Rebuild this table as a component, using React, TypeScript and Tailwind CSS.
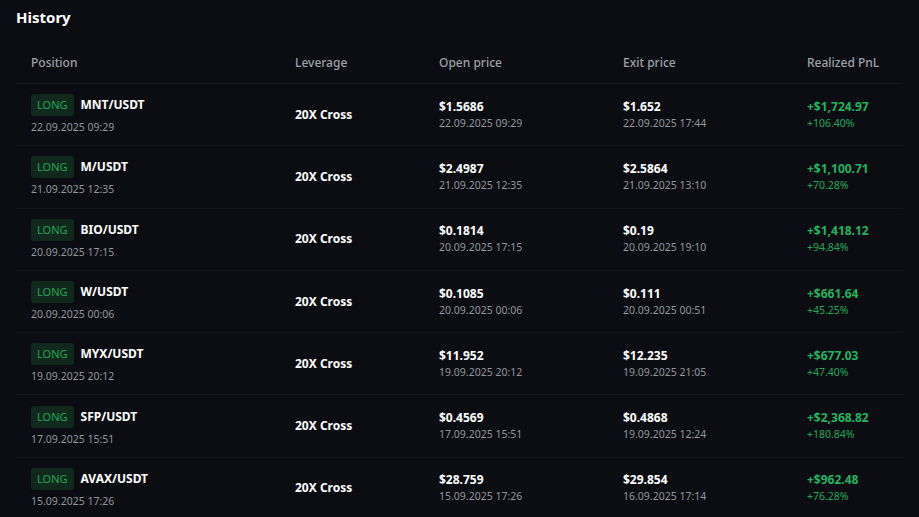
import React from 'react';

type Trade = {
  pair: string;
  opened: string;
  openPrice: string;
  openTime: string;
  exitPrice: string;
  exitTime: string;
  pnl: string;
  pnlPct: string;
};

const trades: Trade[] = [
  { pair: 'MNT/USDT', opened: '22.09.2025 09:29', openPrice: '$1.5686', openTime: '22.09.2025 09:29', exitPrice: '$1.652', exitTime: '22.09.2025 17:44', pnl: '+$1,724.97', pnlPct: '+106.40%' },
  { pair: 'M/USDT', opened: '21.09.2025 12:35', openPrice: '$2.4987', openTime: '21.09.2025 12:35', exitPrice: '$2.5864', exitTime: '21.09.2025 13:10', pnl: '+$1,100.71', pnlPct: '+70.28%' },
  { pair: 'BIO/USDT', opened: '20.09.2025 17:15', openPrice: '$0.1814', openTime: '20.09.2025 17:15', exitPrice: '$0.19', exitTime: '20.09.2025 19:10', pnl: '+$1,418.12', pnlPct: '+94.84%' },
  { pair: 'W/USDT', opened: '20.09.2025 00:06', openPrice: '$0.1085', openTime: '20.09.2025 00:06', exitPrice: '$0.111', exitTime: '20.09.2025 00:51', pnl: '+$661.64', pnlPct: '+45.25%' },
  { pair: 'MYX/USDT', opened: '19.09.2025 20:12', openPrice: '$11.952', openTime: '19.09.2025 20:12', exitPrice: '$12.235', exitTime: '19.09.2025 21:05', pnl: '+$677.03', pnlPct: '+47.40%' },
  { pair: 'SFP/USDT', opened: '17.09.2025 15:51', openPrice: '$0.4569', openTime: '17.09.2025 15:51', exitPrice: '$0.4868', exitTime: '19.09.2025 12:24', pnl: '+$2,368.82', pnlPct: '+180.84%' },
  { pair: 'AVAX/USDT', opened: '15.09.2025 17:26', openPrice: '$28.759', openTime: '15.09.2025 17:26', exitPrice: '$29.854', exitTime: '16.09.2025 17:14', pnl: '+$962.48', pnlPct: '+76.28%' },
];

const cols = 'grid grid-cols-[264px_144px_184px_184px_1fr]';

function PriceCell({ price, time }: { price: string; time: string }) {
  return (
    <div className="flex flex-col px-[15px]">
      <span className="text-[12px] font-bold leading-[16px] text-white">{price}</span>
      <span className="text-[10.5px] leading-[16px] text-[#93969e]">{time}</span>
    </div>
  );
}

export default function App() {
  return (
    <div
      className="h-[517px] w-[919px] overflow-hidden bg-[#0c0d12] px-4"
      style={{ fontFamily: '"Noto Sans", "Open Sans", sans-serif' }}
    >
      {/* Title */}
      <h2 className="pt-[5px] text-[15px] font-bold leading-[24px] text-white">History</h2>

      {/* Header */}
      <div className={`${cols} mt-[14px] h-[41px] items-center border-b border-[#17191f] text-[12px] font-medium text-[#9ea1a9]`}>
        <span className="px-[15px]">Position</span>
        <span className="px-[15px]">Leverage</span>
        <span className="px-[15px]">Open price</span>
        <span className="px-[15px]">Exit price</span>
        <span className="px-[15px]">Realized PnL</span>
      </div>

      {/* Rows */}
      {trades.map((t) => (
        <div key={t.pair} className={`${cols} h-[62.3px] items-center border-b border-[#15171d]`}>
          <div className="flex flex-col gap-[3px] px-[15px]">
            <div className="flex items-center gap-[7px]">
              <span className="rounded-[3px] bg-[#0f2a1c] px-[6px] text-[11px] leading-[22px] text-[#24a65a]">LONG</span>
              <span className="text-[12px] font-bold text-white">{t.pair}</span>
            </div>
            <span className="text-[10.5px] leading-[16px] text-[#93969e]">{t.opened}</span>
          </div>
          <div className="px-[15px] text-[12px] font-bold text-white">20X Cross</div>
          <PriceCell price={t.openPrice} time={t.openTime} />
          <PriceCell price={t.exitPrice} time={t.exitTime} />
          <div className="flex flex-col px-[15px]">
            <span className="text-[12px] font-bold leading-[16px] text-[#23b35f]">{t.pnl}</span>
            <span className="text-[10.5px] leading-[16px] text-[#23a85a]">{t.pnlPct}</span>
          </div>
        </div>
      ))}
    </div>
  );
}
